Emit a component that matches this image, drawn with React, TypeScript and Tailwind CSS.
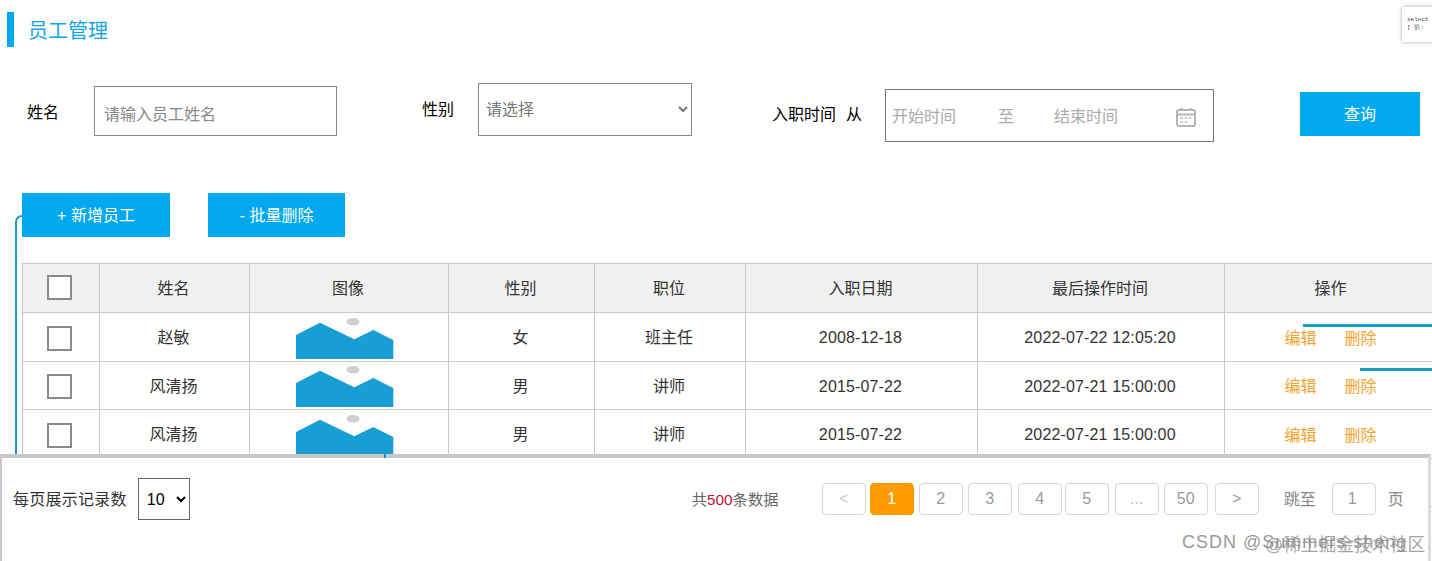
import React from "react";

const rows = [
  { nome: "赵敏", sexo: "女", cargo: "班主任", data: "2008-12-18", ultima: "2022-07-22 12:05:20" },
  { nome: "风清扬", sexo: "男", cargo: "讲师", data: "2015-07-22", ultima: "2022-07-21 15:00:00" },
  { nome: "风清扬", sexo: "男", cargo: "讲师", data: "2015-07-22", ultima: "2022-07-21 15:00:00" },
  { nome: "风清扬", sexo: "男", cargo: "讲师", data: "2015-07-22", ultima: "2022-07-21 15:00:00" },
];

const headers = ["姓名", "图像", "性别", "职位", "入职日期", "最后操作时间", "操作"];

const pages = [
  { label: "<", cls: "w-[44px] text-[#ccc]" },
  { label: "1", cls: "w-[44px] ml-[4px] bg-[#ff9c00] border-[#ff9c00] text-white" },
  { label: "2", cls: "w-[44px] ml-[5px] text-[#999]" },
  { label: "3", cls: "w-[44px] ml-[5px] text-[#999]" },
  { label: "4", cls: "w-[44px] ml-[6px] text-[#999]" },
  { label: "5", cls: "w-[44px] ml-[3px] text-[#999]" },
  { label: "...", cls: "w-[44px] ml-[6px] text-[#bbb]" },
  { label: "50", cls: "w-[44px] ml-[5px] text-[#999]" },
  { label: ">", cls: "w-[44px] ml-[7px] text-[#999]" },
];

function Check() {
  return <div className="w-[25px] h-[25px] mx-auto border-2 border-[#8a8a8a] bg-white" />;
}

function Foto() {
  return (
    <svg width="98" height="41" viewBox="0 0 98 41" className="block">
      <ellipse cx="57" cy="3.8" rx="6.5" ry="3.8" fill="#cfcfcf" />
      <polygon points="0,17 24,4.7 58.3,21.3 77.3,12 97.3,22 97.3,41 0,41" fill="#189dd5" />
    </svg>
  );
}

function Calendario() {
  return (
    <svg width="20" height="20" viewBox="0 0 20 20" fill="none" stroke="#b5b5b5" strokeWidth="2">
      <rect x="1" y="3" width="18" height="16" rx="2" />
      <path d="M1 7.5h18" />
      <path d="M5.5 1v3M14.5 1v3" />
      <path d="M4.5 11h2.5M8.8 11h2.5M13 11h2.5M4.5 15h2.5M8.8 15h2.5" strokeWidth="1.5" />
    </svg>
  );
}

export default function App() {
  return (
    <div
      className="relative h-[561px] w-[1432px] overflow-hidden bg-white text-[16px] text-[#333]"
      style={{ fontFamily: '"Liberation Sans", "Noto Sans CJK SC", sans-serif' }}
    >
      {/* titulo */}
      <div className="flex items-center h-[35px] mt-[12px] ml-[7px] absolute top-0 left-0">
        <div className="w-[7px] h-[35px] bg-[#00a8f0]" />
        <h1 className="ml-[14px] pt-[2px] text-[20px] font-normal text-[#12a5e8]">员工管理</h1>
      </div>

      {/* miniatura */}
      <div className="absolute left-[1402px] top-[7px] w-[40px] h-[35px] bg-white shadow-[0_0_4px_rgba(0,0,0,0.35)] pl-[5px] pt-[9px] text-[6px] leading-[8px] text-[#444] font-mono">
        <div>select</div>
        <div>[ 驻:</div>
      </div>

      {/* filtros */}
      <div className="flex items-start pt-[83px] h-[193px] text-black">
        <span className="ml-[27px] mt-[18px] leading-[24px]">姓名</span>
        <input
          placeholder="请输入员工姓名"
          className="ml-[35px] mt-[3px] w-[243px] h-[50px] border border-[#888] pl-[9px] pt-[8px] outline-none placeholder:text-[#888]"
        />
        <span className="ml-[85px] mt-[15px] leading-[24px]">性别</span>
        <select className="ml-[24px] w-[214px] h-[53px] border border-[#888] bg-white pl-[3px] text-[#777] outline-none">
          <option>请选择</option>
        </select>
        <span className="ml-[80px] mt-[20px] leading-[24px]">入职时间</span>
        <span className="ml-[10px] mt-[20px] leading-[24px]">从</span>
        <div className="ml-[23px] mt-[6px] w-[329px] h-[53px] border border-[#777] flex items-center pl-[6px] pt-[2px] text-[#aaa]">
          <span>开始时间</span>
          <span className="ml-[42px]">至</span>
          <span className="ml-[40px]">结束时间</span>
          <span className="ml-[58px]">
            <Calendario />
          </span>
        </div>
        <button className="ml-[86px] mt-[9px] w-[120px] h-[44px] pt-[1px] bg-[#00a8f0] text-white">查询</button>
      </div>

      {/* acoes */}
      <div className="flex ml-[22px] gap-[38px]">
        <button className="relative z-10 w-[148px] h-[44px] pt-[1px] bg-[#00a8f0] text-white">+ 新增员工</button>
        <button className="w-[137px] h-[44px] pt-[1px] bg-[#00a8f0] text-white">- 批量删除</button>
      </div>

      {/* tabela */}
      <table className="mt-[26px] ml-[22px] w-[1416px] table-fixed border-collapse text-center">
        <colgroup>
          <col className="w-[77px]" />
          <col className="w-[150px]" />
          <col className="w-[199px]" />
          <col className="w-[146px]" />
          <col className="w-[151px]" />
          <col className="w-[232px]" />
          <col className="w-[247px]" />
          <col className="w-[214px]" />
        </colgroup>
        <thead>
          <tr className="h-[49px] bg-[#f1f1f1]">
            <th className="border border-[#c8c8c8] font-normal pr-[4px] pb-[2px]">
              <Check />
            </th>
            {headers.map((h) => (
              <th key={h} className="border border-[#c8c8c8] font-normal pr-[2px] pt-[2px]">
                {h}
              </th>
            ))}
          </tr>
        </thead>
        <tbody>
          {rows.map((r, i) => (
            <tr key={i} className="h-[48.5px]">
              <td className="border border-[#c8c8c8] pr-[4px] pt-[3px]">
                <Check />
              </td>
              <td className="border border-[#c8c8c8] pr-[2px] pt-[3px]">{r.nome}</td>
              <td className="border border-[#c8c8c8] pr-[2px] pt-[3px]">
                <div className="flex justify-center pr-[6px]">
                  <Foto />
                </div>
              </td>
              <td className="border border-[#c8c8c8] pr-[2px] pt-[3px]">{r.sexo}</td>
              <td className="border border-[#c8c8c8] pr-[2px] pt-[3px]">{r.cargo}</td>
              <td className="border border-[#c8c8c8] pr-[2px] pt-[3px] tracking-[0.15px]">{r.data}</td>
              <td className="border border-[#c8c8c8] pr-[2px] pt-[3px] tracking-[0.15px]">{r.ultima}</td>
              <td className="border border-[#c8c8c8] pr-[2px] pt-[3px] text-[#f5a22d]">
                <div className="flex justify-center gap-[28px] pt-[1px]">
                  <span>编辑</span>
                  <span>删除</span>
                </div>
              </td>
            </tr>
          ))}
        </tbody>
      </table>

      {/* linhas azuis por cima */}
      <div className="absolute left-[15px] top-[215px] w-[8px] h-[240px] border-l-[2.5px] border-t-[2.5px] border-[#189dc9] rounded-tl-[7px]" />
      <div className="absolute left-[1303px] top-[324px] w-[129px] h-[3px] bg-[#189dc9]" />
      <div className="absolute left-[1360px] top-[368px] w-[72px] h-[3px] bg-[#189dc9]" />

      {/* rodape */}
      <div className="absolute left-0 top-[454px] w-[1431px] h-[107px] bg-white border-t-4 border-l-2 border-r-[3px] border-[#c9c9c9] border-r-[#dcdcdc] flex items-start text-[#333]">
        <span className="ml-[11px] mt-[30px] leading-[24px] tracking-[0.25px]">每页展示记录数</span>
        <select className="ml-[11px] mt-[20px] w-[52px] h-[42px] border border-[#666] bg-white pl-[4px] text-black outline-none">
          <option>10</option>
        </select>
        <span className="ml-[502px] mt-[30px] leading-[24px] text-[15.3px] text-[#666] w-[87px] whitespace-nowrap">
          共<span className="text-[#c8103c]">500</span>条数据
        </span>
        <div className="ml-[43px] mt-[25px] flex">
          {pages.map((p) => (
            <div
              key={p.label}
              className={`h-[32px] flex items-center justify-center rounded-[4px] border border-[#d5d5d5] ${p.cls}`}
            >
              {p.label}
            </div>
          ))}
        </div>
        <span className="ml-[25px] mt-[30px] leading-[24px] text-[#888]">跳至</span>
        <div className="ml-[16px] mt-[25px] w-[44px] h-[32px] rounded-[4px] border border-[#d5d5d5] flex items-center pl-[15px] text-[#999]">
          1
        </div>
        <span className="ml-[12px] mt-[30px] leading-[24px] text-[#888]">页</span>
      </div>
      <div className="absolute left-[384px] top-[454px] w-[2px] h-[4px] bg-[#189dc9]" />

      {/* marca d'agua */}
      <div className="absolute left-[1182px] top-[531px] text-[18px] leading-[22px] text-[#9a9a9a] whitespace-nowrap tracking-[1px]">
        CSDN @Summers-sheng
      </div>
      <div className="absolute left-[1265px] top-[534px] text-[17.8px] leading-[22px] text-[#8d8d8d]/80 whitespace-nowrap">
        @稀土掘金技术社区
      </div>
    </div>
  );
}
